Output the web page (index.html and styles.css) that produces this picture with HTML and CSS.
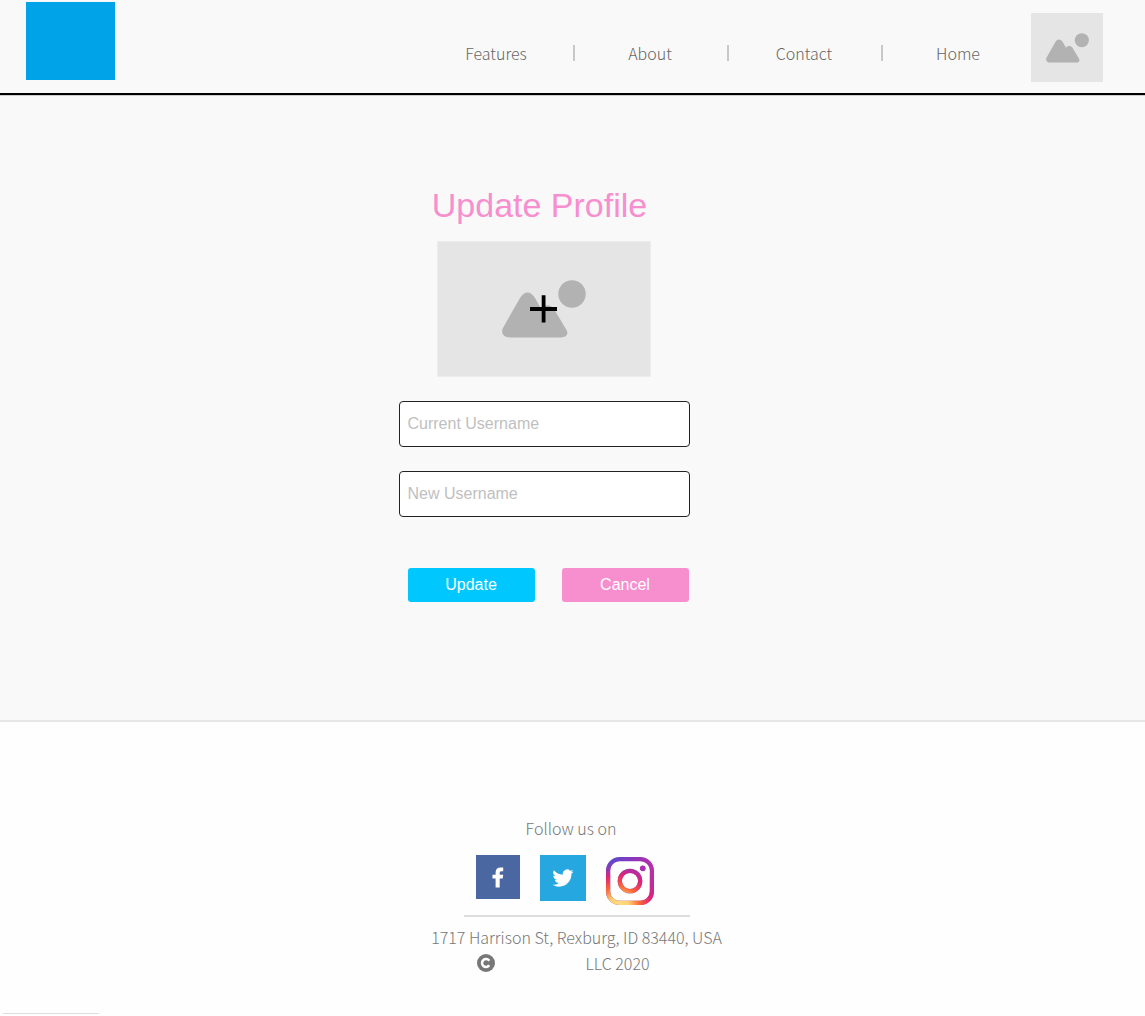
FILE: index.html
```html
<!DOCTYPE html>
<html lang="en">
<head>
<meta charset="utf-8">
<meta name="viewport" content="width=device-width, initial-scale=1">
<title>Update Profile</title>
<link rel="stylesheet" href="styles.css">
</head>
<body>
<header class="site-header">
  <a class="logo" href="#" aria-label="Home page"></a>
  <div class="header-right">
    <nav aria-label="Main">
      <ul class="nav-list">
        <li><a href="#">Features</a></li>
        <li><a href="#">About</a></li>
        <li><a href="#">Contact</a></li>
        <li><a href="#">Home</a></li>
      </ul>
    </nav>
    <a class="avatar" href="#" aria-label="Your profile">
      <svg width="43" height="30" viewBox="0 0 84 58" fill="#b2b2b2" aria-hidden="true">
        <path d="M9 57.500C1.500 57.500-2 53 1.500 47L18 18C22 10.500 29 10.500 33 18L39 28.500C42 24 49 24 52 29L64.500 50C67 54 64 57.500 59 57.500Z"/>
        <circle cx="70" cy="14" r="13.700"/>
      </svg>
    </a>
  </div>
</header>

<main class="content">
  <form class="profile-form">
    <h1>Update Profile</h1>
    <button class="photo" type="button" aria-label="Add a photo">
      <svg width="84" height="58" viewBox="0 0 84 58" fill="#b2b2b2" aria-hidden="true">
        <path d="M9 57.500C1.500 57.500-2 53 1.500 47L18 18C22 10.500 29 10.500 33 18L39 28.500C42 24 49 24 52 29L64.500 50C67 54 64 57.500 59 57.500Z"/>
        <circle cx="70" cy="14" r="13.700"/>
        <path d="M28 27h11.700V15.200h3.800V27H55v4H43.500v11.500h-3.800V31H28z" fill="#000"/>
      </svg>
    </button>
    <input class="field" type="text" placeholder="Current Username" aria-label="Current Username">
    <input class="field" type="text" placeholder="New Username" aria-label="New Username">
    <div class="actions">
      <button class="btn btn-update" type="submit">Update</button>
      <button class="btn btn-cancel" type="button">Cancel</button>
    </div>
  </form>
</main>

<footer class="site-footer">
  <p class="follow">Follow us on</p>
  <div class="social">
    <a href="#" aria-label="Facebook">
      <svg width="44" height="44" viewBox="0 0 44 44" aria-hidden="true">
        <path fill="#4b67a1" d="M0 0h44v44H0z"/>
        <path fill="#fff" d="M19.600 32.500V23.500H16.500V19.700H19.600V17.500C19.600 14.200 21.500 12.500 24.500 12.500H27.200V16.300H25.400C24.100 16.300 23.700 17 23.700 18V19.700H27.200L26.700 23.500H23.700V32.500Z"/>
      </svg>
    </a>
    <a href="#" aria-label="Twitter">
      <svg width="46" height="46" viewBox="0 0 46 46" aria-hidden="true">
        <path fill="#26a7df" d="M0 0h46v46H0z"/>
        <path fill="#fff" transform="translate(12.500 12.500) scale(.88)" d="M23.950 4.570a10 10 0 0 1-2.820.770 4.960 4.960 0 0 0 2.160-2.720c-.950.550-2 .950-3.130 1.180a4.920 4.920 0 0 0-8.380 4.480C7.690 8.090 4.070 6.130 1.640 3.160a4.920 4.920 0 0 0 1.520 6.570 4.900 4.900 0 0 1-2.230-.610v.060a4.920 4.920 0 0 0 3.950 4.830 5 5 0 0 1-2.210.080 4.940 4.940 0 0 0 4.600 3.420A9.870 9.870 0 0 1 0 19.540a13.990 13.990 0 0 0 7.550 2.210c9.050 0 14-7.500 14-13.980 0-.210 0-.420-.020-.630a9.940 9.940 0 0 0 2.420-2.570z"/>
      </svg>
    </a>
    <a class="instagram" href="#" aria-label="Instagram">
      <svg width="48" height="48" viewBox="0 0 48 48" fill="none" aria-hidden="true">
        <defs>
          <linearGradient id="ig-base" gradientUnits="userSpaceOnUse" x1="0" y1="0" x2="46" y2="14">
            <stop offset="0" stop-color="#4b50cf"/>
            <stop offset=".55" stop-color="#8c35bd"/>
            <stop offset="1" stop-color="#b92fa5"/>
          </linearGradient>
          <radialGradient id="ig-glow" gradientUnits="userSpaceOnUse" cx="13" cy="50" r="47">
            <stop offset="0" stop-color="#ffdf80"/>
            <stop offset=".22" stop-color="#ffd072"/>
            <stop offset=".45" stop-color="#fa6536"/>
            <stop offset=".68" stop-color="#e02477"/>
            <stop offset="1" stop-color="#b62ca3" stop-opacity="0"/>
          </radialGradient>
        </defs>
        <g stroke="url(#ig-base)" stroke-width="4.200">
          <rect x="2.100" y="2.100" width="43.800" height="43.800" rx="11.500"/>
          <circle cx="24" cy="24" r="10.200"/>
        </g>
        <g stroke="url(#ig-glow)" stroke-width="4.200">
          <rect x="2.100" y="2.100" width="43.800" height="43.800" rx="11.500"/>
          <circle cx="24" cy="24" r="10.200"/>
        </g>
        <circle cx="36.800" cy="11.300" r="2.900" fill="#ab2fae"/>
      </svg>
    </a>
  </div>
  <div class="legal">
    <hr class="divider">
    <address>1717 Harrison St, Rexburg, ID 83440, USA</address>
    <p class="copyright">
      <svg width="18" height="18" viewBox="0 0 18 18" role="img" aria-label="Copyright">
        <circle cx="9" cy="9" r="9" fill="#777"/>
        <path d="M12.300 6.700A4 4 0 1 0 12.300 11.300" fill="none" stroke="#fff" stroke-width="2.500"/>
      </svg>
      <span>LLC 2020</span>
    </p>
  </div>
  <hr class="end-line">
</footer>
</body>
</html>
```
FILE: styles.css
```css
* {
  box-sizing: border-box;
}

body {
  margin: 0;
  background: #fefefe;
  color: #666;
  font-family: "Noto Sans CJK SC", "Noto Sans", sans-serif;
  font-size: 16px;
  font-weight: 300;
  line-height: 26px;
}

a {
  color: inherit;
  text-decoration: none;
}

svg {
  display: block;
}

.site-header {
  display: flex;
  justify-content: space-between;
  align-items: flex-start;
  padding: 2px 42px 11px 26px;
  background: #f9f9f9;
  border-bottom: 2px solid #000;
}

.logo {
  width: 89px;
  height: 78px;
  background: #00a2e8;
}

.header-right {
  display: flex;
  align-items: flex-start;
  padding-top: 11px;
}

.nav-list {
  display: grid;
  grid-template-columns: repeat(3, 154px) 148px;
  margin: 0;
  padding: 32px 0 0;
  list-style: none;
  text-align: center;
  line-height: 16px;
}

.nav-list li:not(:last-child) {
  padding-right: 2px;
  border-right: 2px solid #c8c8c8;
}

.nav-list li:last-child {
  padding-left: 2px;
}

.avatar {
  display: flex;
  justify-content: center;
  align-items: center;
  width: 72px;
  height: 69px;
  background: #e5e5e5;
}

.content {
  display: flex;
  justify-content: center;
  padding: 89px 57px 118px 0;
  background: #f9f9f9;
  border-top: 1px solid #ccc;
  border-bottom: 2px solid #e6e6e6;
}

.profile-form {
  display: flex;
  flex-direction: column;
  align-items: center;
  width: 291px;
  font-family: "Liberation Sans", Arial, sans-serif;
}

h1 {
  margin: 0 9px 16px 0;
  color: #f78fcf;
  font-size: 34px;
  font-weight: 400;
  line-height: 40px;
}

.photo {
  display: flex;
  justify-content: center;
  align-items: center;
  width: 214px;
  height: 136px;
  margin: 0 0 24px;
  padding: 0;
  border: 1px solid #ececec;
  background: #e5e5e5;
}

.field {
  width: 100%;
  height: 46px;
  margin: 0 0 24px;
  padding: 0 8px 1px;
  border: 1px solid #222;
  border-radius: 4px;
  background: #fff;
  color: #333;
  font: 16px "Liberation Sans", Arial, sans-serif;
}

.field::placeholder {
  color: #c0c0c0;
  opacity: 1;
}

.actions {
  display: flex;
  align-self: flex-end;
  gap: 27px;
  margin: 27px 1px 0 0;
}

.btn {
  width: 127px;
  height: 34px;
  padding: 0;
  border: 0;
  border-radius: 3px;
  color: #fff;
  font: 16px "Liberation Sans", Arial, sans-serif;
}

.btn-update {
  background: #00c8ff;
}

.btn-cancel {
  background: #f78fcf;
}

.site-footer {
  display: flex;
  flex-direction: column;
  align-items: center;
  padding-top: 93px;
  color: #777;
}

.site-footer p {
  margin: 0;
}

.site-footer .follow {
  padding-right: 3px;
}

.social {
  display: flex;
  align-items: flex-start;
  gap: 20px;
  padding: 14px 16px 10px 0;
}

.instagram {
  padding-top: 2px;
}

.legal {
  display: flex;
  flex-direction: column;
  align-items: center;
  padding-left: 8px;
}

.divider {
  width: 226px;
  height: 2px;
  margin: 0 0 7px;
  border: 0;
  background: #ddd;
}

address {
  font-style: normal;
}

.site-footer .copyright {
  display: flex;
  align-items: center;
  gap: 90px;
  padding-right: 26px;
}

.end-line {
  align-self: flex-start;
  width: 96px;
  height: 1px;
  margin: 37px 3px 2px;
  border: 0;
  background: #ddd;
}
```
